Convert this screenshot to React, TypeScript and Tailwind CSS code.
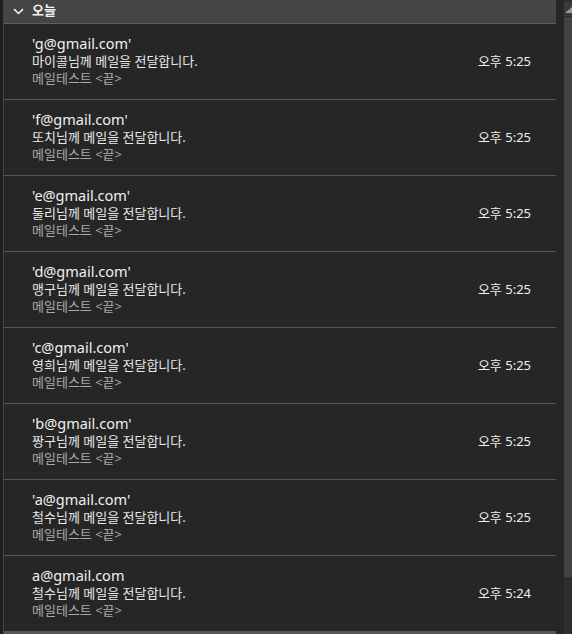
import React from "react";

const rows = [
  { email: "'g@gmail.com'", name: "마이콜", time: "오후 5:25" },
  { email: "'f@gmail.com'", name: "또치", time: "오후 5:25" },
  { email: "'e@gmail.com'", name: "둘리", time: "오후 5:25" },
  { email: "'d@gmail.com'", name: "맹구", time: "오후 5:25" },
  { email: "'c@gmail.com'", name: "영희", time: "오후 5:25" },
  { email: "'b@gmail.com'", name: "짱구", time: "오후 5:25" },
  { email: "'a@gmail.com'", name: "철수", time: "오후 5:25" },
  { email: "a@gmail.com", name: "철수", time: "오후 5:24" },
];

const font = { fontFamily: '"Noto Sans", "Noto Sans CJK KR", sans-serif' };

export default function App() {
  return (
    <div className="flex w-[572px] h-[634px] bg-[#262626] overflow-hidden" style={font}>
      <div className="w-[3px] h-full bg-[#1f1f1f]" />
      <div className="w-px h-full bg-[#434343]" />
      <div className="flex flex-col w-[552px] h-full">
        <div className="flex items-center h-[24px] shrink-0 bg-[#454545] border-b border-[#5c5c5c]">
          <svg width="11" height="7" viewBox="0 0 11 7" className="ml-[9px]">
            <path d="M1 1.2 L5.5 5.5 L10 1.2" fill="none" stroke="#f0f0f0" strokeWidth="1.6" />
          </svg>
          <span className="ml-[8px] text-[13px] leading-none font-semibold text-[#f2f2f2] pb-[2px]">오늘</span>
        </div>
        {rows.map((r, i) => {
          const last = i === rows.length - 1;
          return (
            <div
              key={i}
              className={
                last
                  ? "flex items-center shrink-0 h-[78px] border-b-[3px] border-[#555555] pl-[28px] pr-[25px]"
                  : "flex items-center shrink-0 h-[76px] border-b border-[#555555] pl-[28px] pr-[25px]"
              }
            >
              <div className="flex flex-col flex-1 pb-[2px]">
                <div className="text-[14.5px] leading-[19px] text-[#f0f0f0]">{r.email}</div>
                <div className="text-[13px] leading-[17px] text-[#e8e8e8]">{r.name}님께 메일을 전달합니다.</div>
                <div className="text-[13px] leading-[17px] text-[#a9a9a9]">메일테스트 &lt;끝&gt;</div>
              </div>
              <div className="text-[13px] leading-none text-[#f0f0f0]">{r.time}</div>
            </div>
          );
        })}
      </div>
      <div className="w-[8px] h-full bg-[#262626]" />
      <div className="flex flex-col w-[8px] h-full bg-[#2e2e2e] pt-[2px]">
        <div className="h-[14px] bg-[#3a3a3a] flex items-end justify-start pl-[1px] pb-[3px]">
          <svg width="7" height="6" viewBox="0 0 7 6">
            <path d="M0 6 L7 0 L7 6 Z" fill="#9a9a9a" />
          </svg>
        </div>
        <div className="mt-[1px] h-[560px] bg-[#424242]" />
      </div>
    </div>
  );
}
